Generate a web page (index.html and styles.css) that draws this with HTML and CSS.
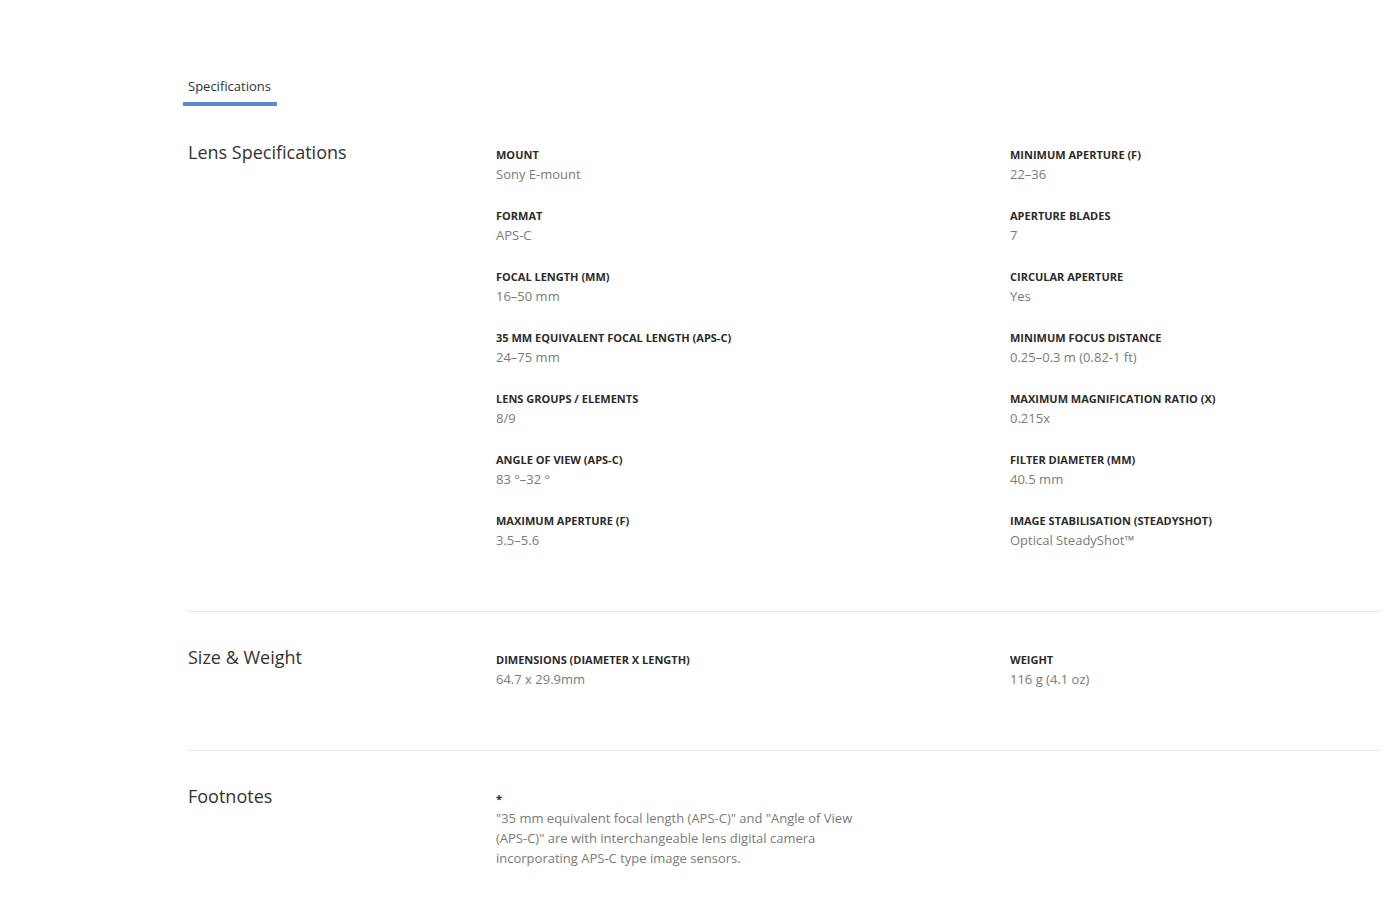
FILE: index.html
```html
<!DOCTYPE html>
<html lang="en">
<head>
    <meta charset="UTF-8">
    <meta name="viewport" content="width=device-width, initial-scale=1.0">
    <title>Specifications</title>
    <link rel="stylesheet" href="styles.css">
</head>
<body>
    <div class="page">
        <div class="tabs">
            <span class="tab active">Specifications</span>
        </div>

        <section class="spec-section">
            <h2>Lens Specifications</h2>
            <div class="spec-grid">
                <div class="spec-col">
                    <div class="spec-item"><div class="label">Mount</div><div class="value">Sony E-mount</div></div>
                    <div class="spec-item"><div class="label">Format</div><div class="value">APS-C</div></div>
                    <div class="spec-item"><div class="label">Focal Length (mm)</div><div class="value">16–50 mm</div></div>
                    <div class="spec-item"><div class="label">35 mm Equivalent Focal Length (APS-C)</div><div class="value">24–75 mm</div></div>
                    <div class="spec-item"><div class="label">Lens Groups / Elements</div><div class="value">8/9</div></div>
                    <div class="spec-item"><div class="label">Angle of View (APS-C)</div><div class="value">83 °–32 °</div></div>
                    <div class="spec-item"><div class="label">Maximum Aperture (F)</div><div class="value">3.5–5.6</div></div>
                </div>
                <div class="spec-col">
                    <div class="spec-item"><div class="label">Minimum Aperture (F)</div><div class="value">22–36</div></div>
                    <div class="spec-item"><div class="label">Aperture Blades</div><div class="value">7</div></div>
                    <div class="spec-item"><div class="label">Circular Aperture</div><div class="value">Yes</div></div>
                    <div class="spec-item"><div class="label">Minimum Focus Distance</div><div class="value">0.25–0.3 m (0.82-1 ft)</div></div>
                    <div class="spec-item"><div class="label">Maximum Magnification Ratio (x)</div><div class="value">0.215x</div></div>
                    <div class="spec-item"><div class="label">Filter Diameter (mm)</div><div class="value">40.5 mm</div></div>
                    <div class="spec-item"><div class="label">Image Stabilisation (SteadyShot)</div><div class="value">Optical SteadyShot™</div></div>
                </div>
            </div>
        </section>

        <section class="spec-section">
            <h2>Size &amp; Weight</h2>
            <div class="spec-grid">
                <div class="spec-col">
                    <div class="spec-item"><div class="label">Dimensions (Diameter x Length)</div><div class="value">64.7 x 29.9mm</div></div>
                </div>
                <div class="spec-col">
                    <div class="spec-item"><div class="label">Weight</div><div class="value">116 g (4.1 oz)</div></div>
                </div>
            </div>
        </section>

        <section class="spec-section last">
            <h2>Footnotes</h2>
            <div class="spec-grid">
                <div class="spec-col">
                    <div class="spec-item">
                        <div class="label">*</div>
                        <div class="value note">"35 mm equivalent focal length (APS-C)" and "Angle of View (APS-C)" are with interchangeable lens digital camera incorporating APS-C type image sensors.</div>
                    </div>
                </div>
            </div>
        </section>
    </div>
</body>
</html>
```

FILE: styles.css
```css
body {
    margin: 0;
    background-color: #fff;
    color: #333;
    font-family: "Open Sans", "Noto Sans", sans-serif;
}
.page {
    margin-left: 188px;
    max-width: 1192px;
    padding-top: 76px;
}
.tabs {
    display: flex;
    margin-left: -5px;
}
.tab {
    font-size: 13px;
    line-height: 20px;
    color: #333;
    padding: 0 5px 6px;
    width: 84px;
    border-bottom: 4px solid #5b87d6;
}
.spec-section {
    display: grid;
    grid-template-columns: 308px 1fr;
    padding: 33px 0 61px;
    border-bottom: 1px solid #e6e6e6;
}
.spec-section + .spec-section {
    padding-top: 32px;
}
.spec-section.last {
    border-bottom: none;
}
h2 {
    margin: 0;
    font-size: 18px;
    line-height: 26px;
    font-weight: 400;
    color: #333;
}
.spec-grid {
    display: grid;
    grid-template-columns: 514px 1fr;
    padding-top: 8px;
}
.spec-item {
    margin-bottom: 24px;
}
.spec-item:last-child {
    margin-bottom: 0;
}
.label {
    font-size: 11px;
    line-height: 16px;
    font-weight: 700;
    text-transform: uppercase;
    color: #2b2b2b;
}
.value {
    font-size: 13px;
    line-height: 20px;
    padding-top: 1px;
    color: #7a7a7a;
}
.note {
    max-width: 372px;
}
```
